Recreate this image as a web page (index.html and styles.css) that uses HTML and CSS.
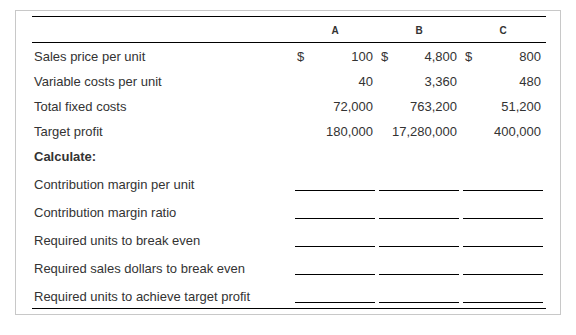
FILE: index.html
```html
<!DOCTYPE html>
<html>
<head>
<meta charset="utf-8">
<link rel="stylesheet" href="styles.css">
</head>
<body>
<div class="box">
  <div class="table">
    <div class="row head">
      <div class="label"></div>
      <div class="hcell">A</div>
      <div class="hcell">B</div>
      <div class="hcell">C</div>
    </div>
    <div class="row data">
      <div class="label">Sales price per unit</div>
      <div class="cell"><span class="cur">$</span><span class="num">100</span></div>
      <div class="cell"><span class="cur">$</span><span class="num">4,800</span></div>
      <div class="cell"><span class="cur">$</span><span class="num">800</span></div>
    </div>
    <div class="row data">
      <div class="label">Variable costs per unit</div>
      <div class="cell"><span class="num">40</span></div>
      <div class="cell"><span class="num">3,360</span></div>
      <div class="cell"><span class="num">480</span></div>
    </div>
    <div class="row data">
      <div class="label">Total fixed costs</div>
      <div class="cell"><span class="num">72,000</span></div>
      <div class="cell"><span class="num">763,200</span></div>
      <div class="cell"><span class="num">51,200</span></div>
    </div>
    <div class="row data">
      <div class="label">Target profit</div>
      <div class="cell"><span class="num">180,000</span></div>
      <div class="cell"><span class="num">17,280,000</span></div>
      <div class="cell"><span class="num">400,000</span></div>
    </div>
    <div class="row data">
      <div class="label bold">Calculate:</div>
    </div>
    <div class="row calc">
      <div class="label">Contribution margin per unit</div>
      <div class="icell"><div class="blank"></div></div>
      <div class="icell"><div class="blank"></div></div>
      <div class="icell"><div class="blank"></div></div>
    </div>
    <div class="row calc">
      <div class="label">Contribution margin ratio</div>
      <div class="icell"><div class="blank"></div></div>
      <div class="icell"><div class="blank"></div></div>
      <div class="icell"><div class="blank"></div></div>
    </div>
    <div class="row calc">
      <div class="label">Required units to break even</div>
      <div class="icell"><div class="blank"></div></div>
      <div class="icell"><div class="blank"></div></div>
      <div class="icell"><div class="blank"></div></div>
    </div>
    <div class="row calc">
      <div class="label">Required sales dollars to break even</div>
      <div class="icell"><div class="blank"></div></div>
      <div class="icell"><div class="blank"></div></div>
      <div class="icell"><div class="blank"></div></div>
    </div>
    <div class="row calc">
      <div class="label">Required units to achieve target profit</div>
      <div class="icell"><div class="blank"></div></div>
      <div class="icell"><div class="blank"></div></div>
      <div class="icell"><div class="blank"></div></div>
    </div>
  </div>
</div>
</body>
</html>
```

FILE: styles.css
```css
html, body {
  margin: 0;
  padding: 0;
  background: #fff;
}
body {
  font-family: "Liberation Sans", Arial, sans-serif;
  font-size: 13px;
  color: #333;
}
.box {
  margin: 10px 0 0 15px;
  width: 514px;
  padding: 5px 14px 5px 16px;
  border: 1px solid #c8c8c8;
}
.table {
  border-top: 1px solid #000;
  border-bottom: 1px solid #000;
}
.row {
  display: grid;
  grid-template-columns: 261px 84px 84px 84px;
}
.label {
  padding-left: 2px;
}
.head {
  border-bottom: 1px solid #000;
  box-sizing: border-box;
  height: 26px;
}
.hcell {
  font-size: 10px;
  font-weight: bold;
  text-align: center;
  line-height: 12px;
  padding-top: 8px;
  color: #333;
}
.data {
  height: 25px;
}
.data .label {
  padding-top: 6px;
  line-height: 16px;
}
.bold {
  font-weight: bold;
}
.cell {
  display: flex;
  justify-content: flex-end;
  padding: 6px 4px 0 4px;
  line-height: 16px;
}
.cur {
  margin-right: auto;
}
.calc {
  height: 28px;
}
.calc .label {
  padding-top: 9px;
  line-height: 16px;
}
.icell {
  padding: 0 2px;
}
.blank {
  height: 23px;
  box-sizing: border-box;
  border-bottom: 1px solid #000;
}
```
